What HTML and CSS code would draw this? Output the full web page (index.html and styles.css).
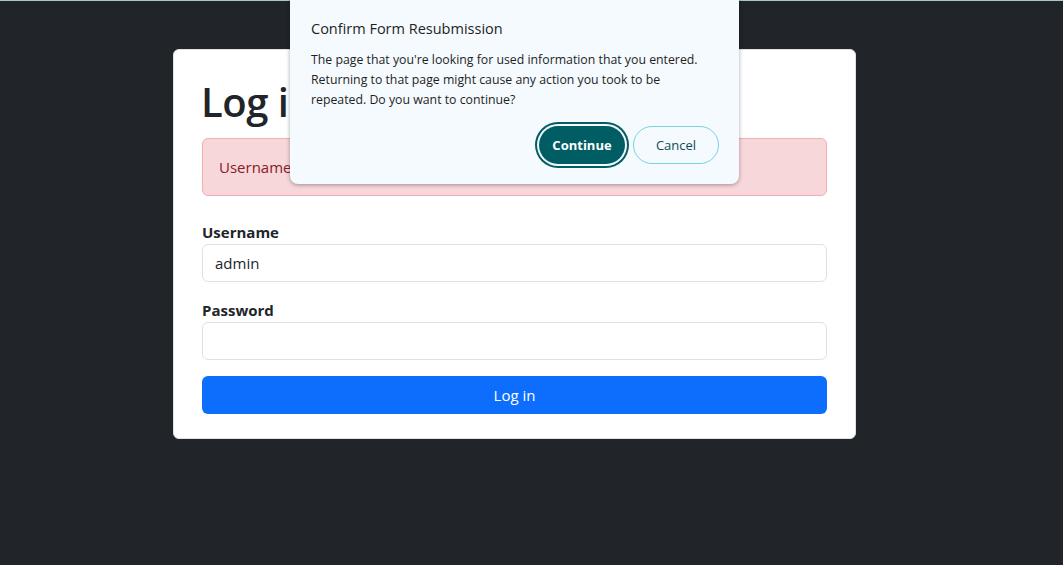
FILE: index.html
```html
<!DOCTYPE html>
<html lang="en">
<head>
    <title>Log in</title>
    <meta charset="utf-8">
    <meta name="viewport" content="width=device-width, initial-scale=1">
    <link rel="stylesheet" href="styles.css">
</head>
<body>
    <main class="page">
        <div class="login-card">
            <h1>Log in</h1>
            <div class="alert">Username or password is incorrect.</div>

            <form class="login-form">
                <label for="username">Username</label>
                <input class="field" id="username" type="text" value="admin">

                <label for="password">Password</label>
                <input class="field" id="password" type="password">

                <button class="btn-login" type="button">Log in</button>
            </form>
        </div>
    </main>

    <div class="resubmit-dialog">
        <h2>Confirm Form Resubmission</h2>
        <p>
            The page that you're looking for used information that you entered.
            Returning to that page might cause any action you took to be
            repeated. Do you want to continue?
        </p>
        <div class="dialog-actions">
            <button class="btn-continue" type="button">Continue</button>
            <button class="btn-cancel" type="button">Cancel</button>
        </div>
    </div>
</body>
</html>
```

FILE: styles.css
```css
* {
    box-sizing: border-box;
    margin: 0;
    padding: 0;
}

body {
    background: #212529;
    border-top: 1px solid #a9c9cc;
    color: #212529;
    font-family: "Open Sans", "Noto Sans", sans-serif;
    height: 565px;
    overflow: hidden;
}

.page {
    padding-top: 48px;
}

.login-card {
    background: white;
    border: 1px solid #dee2e6;
    border-radius: 6px;
    width: 683px;
    margin-left: 173px;
    padding: 28px 28px 24px;
}

h1 {
    font-size: 40px;
    font-weight: 600;
    line-height: 48px;
    letter-spacing: -0.5px;
    margin-bottom: 12px;
    margin-left: -1px;
}

.alert {
    background: #f8d7da;
    border: 1px solid #f1aeb5;
    border-radius: 6px;
    color: #842029;
    font-size: 15px;
    padding: 16px;
    line-height: 24px;
    margin-bottom: 24px;
}

.login-form {
    display: flex;
    flex-direction: column;
}

.login-form label {
    font-size: 15px;
    font-weight: 700;
    line-height: 24px;
}

.field {
    height: 38px;
    border: 1px solid #dee2e6;
    border-radius: 6px;
    padding: 0 12px;
    font-family: inherit;
    font-size: 15px;
    color: #212529;
    margin-bottom: 16px;
}

.btn-login {
    height: 38px;
    background: #0d6efd;
    border: none;
    border-radius: 6px;
    color: white;
    font-family: inherit;
    font-size: 15px;
}

.resubmit-dialog {
    position: absolute;
    top: -8px;
    left: 290px;
    width: 449px;
    height: 192px;
    background: #f4fafd;
    border-radius: 8px;
    box-shadow: 0 1px 4px rgba(0, 0, 0, 0.35);
    padding: 26px 20px 0 21px;
}

.resubmit-dialog h2 {
    font-size: 14.5px;
    font-weight: 500;
    color: #1f1f1f;
    line-height: 22px;
    margin-bottom: 10px;
}

.resubmit-dialog p {
    font-size: 12.3px;
    line-height: 20px;
    color: #1f1f1f;
    max-width: 395px;
}

.dialog-actions {
    display: flex;
    justify-content: flex-end;
    gap: 5px;
    margin-top: 16px;
}

.btn-continue, .btn-cancel {
    font-family: inherit;
    font-size: 13px;
    border-radius: 20px;
    height: 38px;
}

.btn-continue {
    background: #005d63;
    color: white;
    font-weight: 700;
    width: 86px;
    border: none;
    box-shadow: 0 0 0 2px #f4fafd, 0 0 0 4px #005d63;
    margin: 0 3px 0 0;
}

.btn-cancel {
    background: transparent;
    color: #0d4d57;
    font-weight: 500;
    width: 86px;
    border: 1px solid #7ad3e0;
}
```
